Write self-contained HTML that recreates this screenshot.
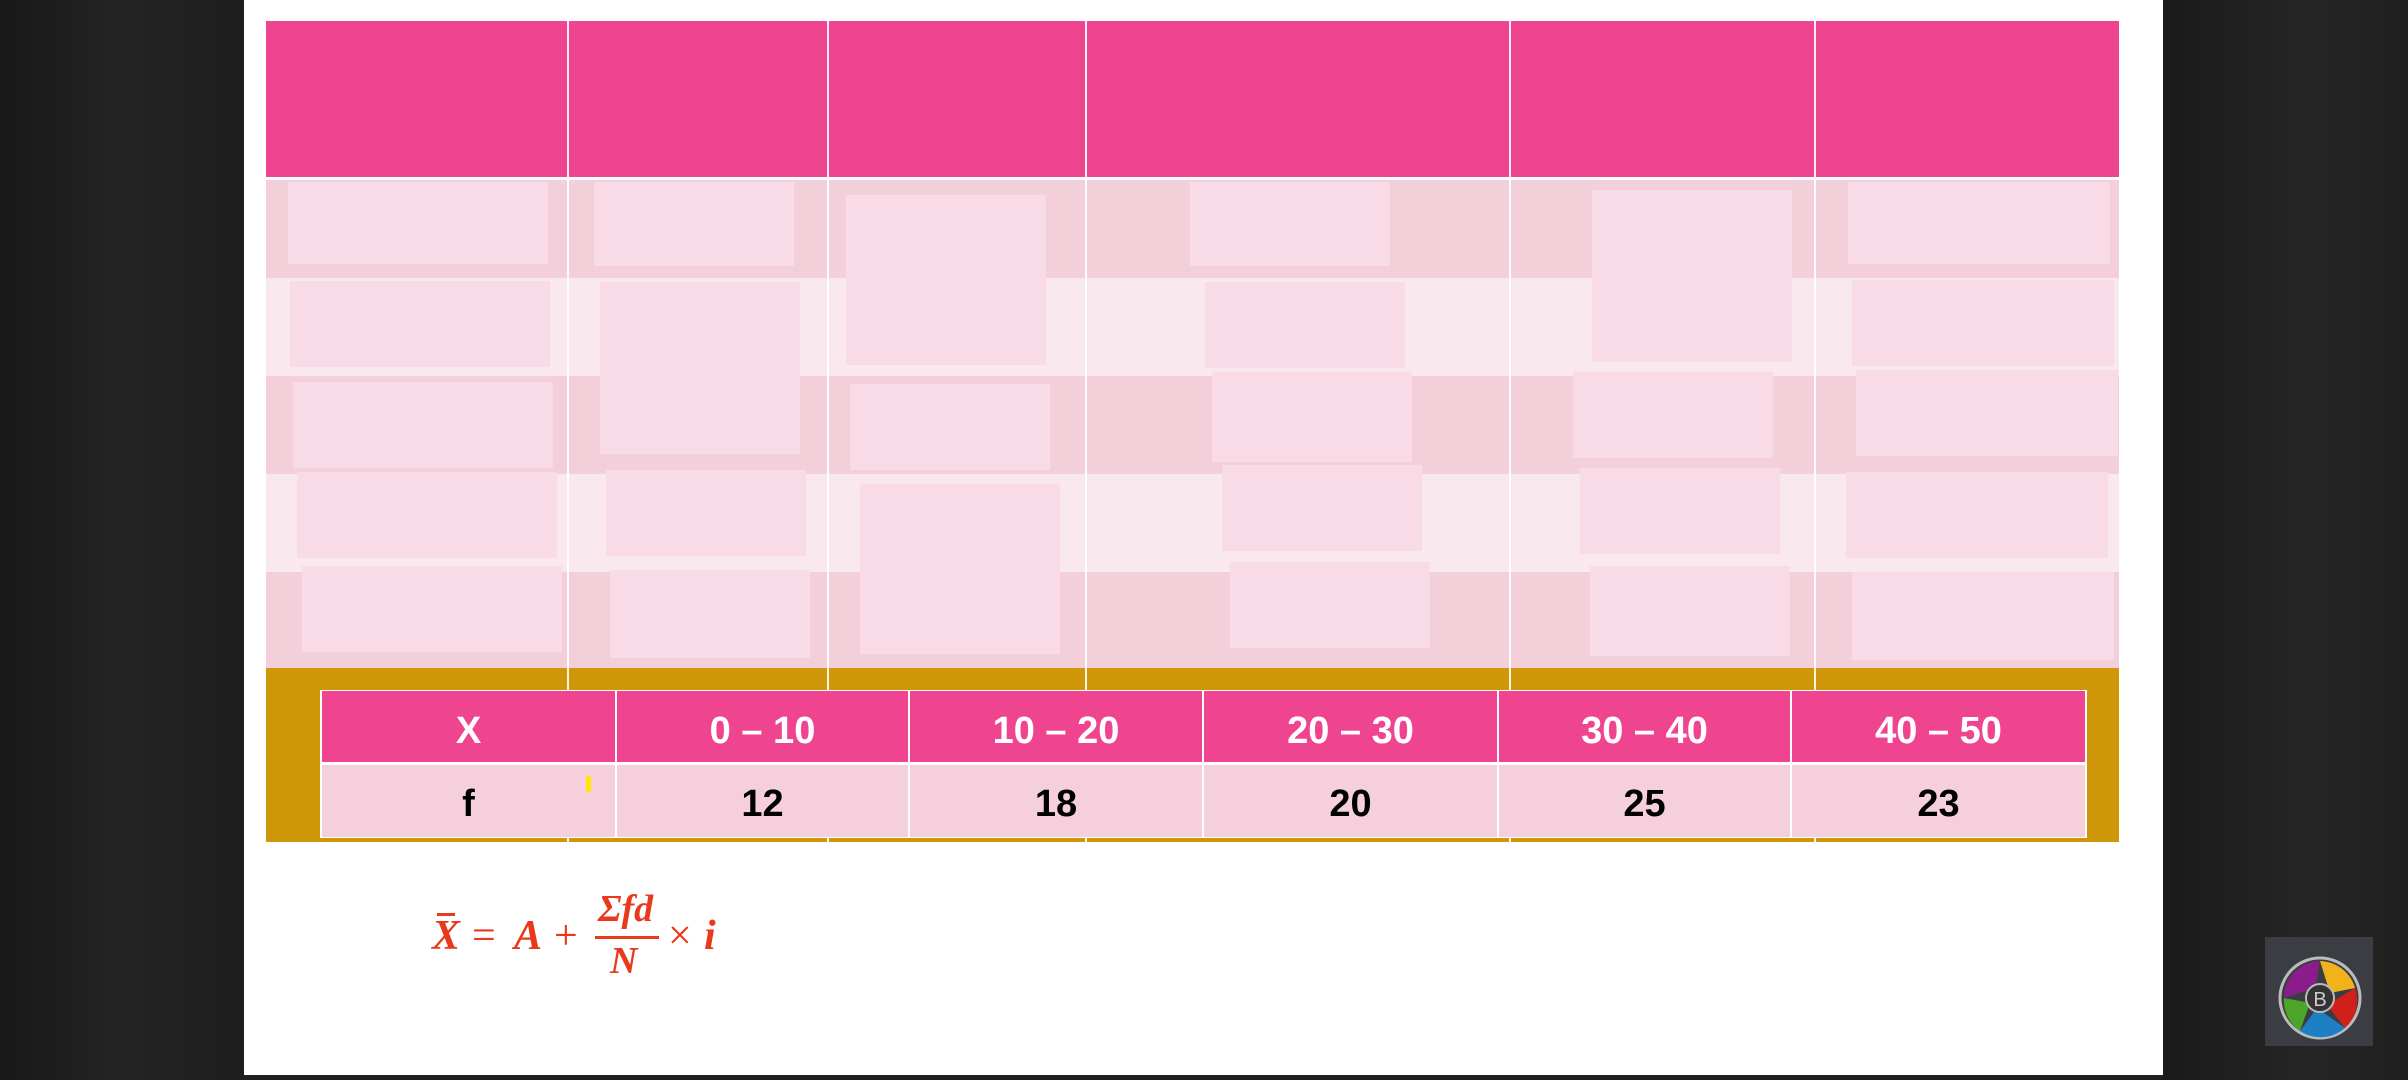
<!DOCTYPE html>
<html><head><meta charset="utf-8"><style>
*{margin:0;padding:0;box-sizing:border-box}
body{width:2408px;height:1080px;overflow:hidden;background:linear-gradient(90deg,#181818,#242424 5%,#1e1e1e 10%);position:relative;font-family:"Liberation Sans",sans-serif}
.right{position:absolute;left:2163px;top:0;width:245px;height:1080px;background:linear-gradient(90deg,#1a1a1a,#262626 60%,#1f1f1f)}
.slide{position:absolute;left:244px;top:0;width:1919px;height:1075px;background:#fff}
.a{position:absolute}
.hd{top:21px;height:156px;background:#ef4591}
.vl{position:absolute;width:2px;background:#fff;top:21px;height:821px;opacity:.9}
.row{left:266px;width:1853px;height:98px}
.in{position:absolute;background:#f8dbe6}
.t{position:absolute;color:#fff;font-weight:bold;font-size:38px;text-align:center;line-height:81px;top:691px;height:71px;background:#ef4591}
.f{position:absolute;color:#000;font-weight:bold;font-size:38px;text-align:center;line-height:78px;top:765px;height:72px;background:#f5d0dc}
.fm{position:absolute;color:#e8391c;font-family:"Liberation Serif",serif;font-weight:bold;font-style:italic;font-size:42px;line-height:1}
</style></head><body>
<div class="right"></div>
<div class="slide"></div>
<div class="a hd" style="left:266px;width:1853px"></div>
<div class="a row" style="top:180px;background:#f3cfda"></div>
<div class="a row" style="top:278px;background:#f9e8ed"></div>
<div class="a row" style="top:376px;background:#f3cfda"></div>
<div class="a row" style="top:474px;background:#f9e8ed"></div>
<div class="a row" style="top:572px;background:#f3cfda"></div>
<div class="in" style="left:288px;top:182px;width:260px;height:82px"></div>
<div class="in" style="left:290px;top:281px;width:260px;height:86px"></div>
<div class="in" style="left:293px;top:382px;width:260px;height:86px"></div>
<div class="in" style="left:297px;top:472px;width:260px;height:86px"></div>
<div class="in" style="left:302px;top:566px;width:260px;height:86px"></div>
<div class="in" style="left:594px;top:182px;width:200px;height:84px"></div>
<div class="in" style="left:600px;top:282px;width:200px;height:172px"></div>
<div class="in" style="left:606px;top:470px;width:200px;height:86px"></div>
<div class="in" style="left:610px;top:570px;width:200px;height:88px"></div>
<div class="in" style="left:846px;top:195px;width:200px;height:170px"></div>
<div class="in" style="left:850px;top:384px;width:200px;height:86px"></div>
<div class="in" style="left:860px;top:484px;width:200px;height:170px"></div>
<div class="in" style="left:1190px;top:182px;width:200px;height:84px"></div>
<div class="in" style="left:1205px;top:282px;width:200px;height:86px"></div>
<div class="in" style="left:1212px;top:372px;width:200px;height:90px"></div>
<div class="in" style="left:1222px;top:465px;width:200px;height:86px"></div>
<div class="in" style="left:1230px;top:562px;width:200px;height:86px"></div>
<div class="in" style="left:1592px;top:190px;width:200px;height:172px"></div>
<div class="in" style="left:1573px;top:372px;width:200px;height:86px"></div>
<div class="in" style="left:1580px;top:468px;width:200px;height:86px"></div>
<div class="in" style="left:1590px;top:566px;width:200px;height:90px"></div>
<div class="in" style="left:1848px;top:182px;width:262px;height:82px"></div>
<div class="in" style="left:1852px;top:280px;width:262px;height:86px"></div>
<div class="in" style="left:1856px;top:370px;width:262px;height:86px"></div>
<div class="in" style="left:1846px;top:472px;width:262px;height:86px"></div>
<div class="in" style="left:1852px;top:572px;width:262px;height:88px"></div>
<div class="a" style="left:266px;top:668px;width:1853px;height:174px;background:#d0960a"></div>
<div class="vl" style="left:567px"></div><div class="vl" style="left:827px"></div><div class="vl" style="left:1085px"></div><div class="vl" style="left:1509px"></div><div class="vl" style="left:1814px"></div>
<div class="a" style="left:266px;top:177px;width:1853px;height:3px;background:#fff"></div>
<div class="a" style="left:320px;top:690px;width:1767px;height:148px;background:#fff"></div>
<div class="t" style="left:322px;width:293px">X</div>
<div class="t" style="left:617px;width:291px">0 – 10</div>
<div class="t" style="left:910px;width:292px">10 – 20</div>
<div class="t" style="left:1204px;width:293px">20 – 30</div>
<div class="t" style="left:1499px;width:291px">30 – 40</div>
<div class="t" style="left:1792px;width:293px">40 – 50</div>
<div class="f" style="left:322px;width:293px">f</div>
<div class="f" style="left:617px;width:291px">12</div>
<div class="f" style="left:910px;width:292px">18</div>
<div class="f" style="left:1204px;width:293px">20</div>
<div class="f" style="left:1499px;width:291px">25</div>
<div class="f" style="left:1792px;width:293px">23</div>
<div class="a" style="left:586px;top:776px;width:5px;height:16px;background:#ffe800"></div>
<div class="fm" style="left:432px;top:915px">X</div>
<div class="a" style="left:437px;top:913px;width:18px;height:3px;background:#e8391c"></div>
<div class="fm" style="left:472px;top:915px;font-style:normal;font-weight:normal">=</div>
<div class="fm" style="left:514px;top:915px">A</div>
<div class="fm" style="left:554px;top:915px;font-style:normal;font-weight:normal">+</div>
<div class="fm" style="left:598px;top:890px;font-size:38px">Σfd</div>
<div class="a" style="left:595px;top:936px;width:64px;height:3px;background:#e8391c"></div>
<div class="fm" style="left:610px;top:942px;font-size:38px">N</div>
<div class="fm" style="left:668px;top:915px;font-style:normal;font-weight:normal">×</div>
<div class="fm" style="left:704px;top:915px">i</div>
<div class="a" style="left:2265px;top:937px;width:108px;height:109px;background:#3a3e42"></div>
<svg class="a" style="left:2275px;top:953px" width="90" height="90" viewBox="0 0 90 90">
<circle cx="45" cy="45" r="40" fill="none" stroke="#bbb" stroke-width="3"/>
<path d="M45 8 A37 37 0 0 1 80 35 L55 40 Z" fill="#f2b21c"/>
<path d="M80 35 A37 37 0 0 1 70 75 L52 52 Z" fill="#d0201c"/>
<path d="M70 75 A37 37 0 0 1 25 78 L42 55 Z" fill="#1d7fc4"/>
<path d="M25 78 A37 37 0 0 1 9 45 L35 50 Z" fill="#4aa52a"/>
<path d="M9 45 A37 37 0 0 1 45 8 L40 35 Z" fill="#8b1c8c"/>
<circle cx="45" cy="45" r="14" fill="#333" stroke="#bbb" stroke-width="2"/>
<text x="45" y="53" font-family="Liberation Sans" font-size="20" fill="#ccc" text-anchor="middle">B</text>
</svg>
</body></html>
